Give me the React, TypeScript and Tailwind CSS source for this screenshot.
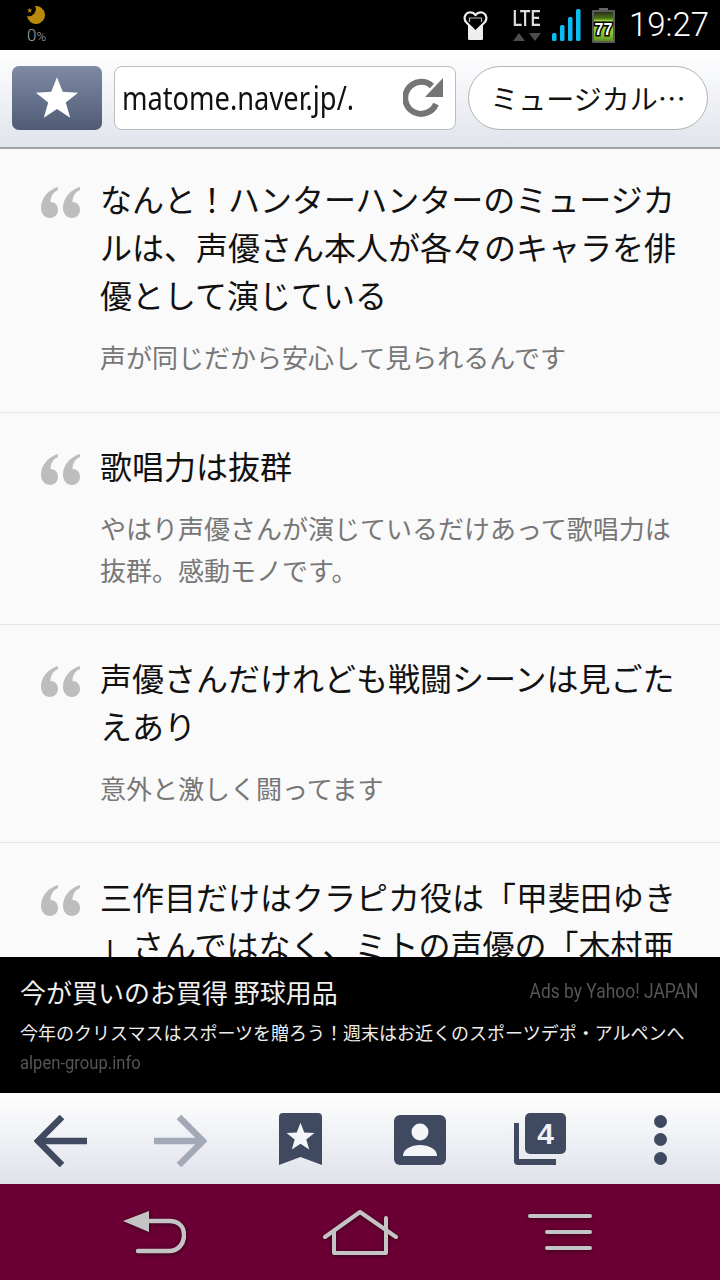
const jp = "font-['Noto_Sans_CJK_JP',sans-serif]";

const STAR = "50,3 63,36 98,38 70,60 80,95 50,75 20,95 30,60 2,38 37,36";

interface Quote {
  title: string[];
  body?: string[];
  pt: string;
}

const quotes: Quote[] = [
  {
    title: ["なんと！ハンターハンターのミュージカ", "ルは、声優さん本人が各々のキャラを俳", "優として演じている"],
    body: ["声が同じだから安心して見られるんです"],
    pt: "pt-[25px] pb-[34px]",
  },
  {
    title: ["歌唱力は抜群"],
    body: ["やはり声優さんが演じているだけあって歌唱力は", "抜群。感動モノです。"],
    pt: "pt-[28px] pb-[33px]",
  },
  {
    title: ["声優さんだけれども戦闘シーンは見ごた", "えあり"],
    body: ["意外と激しく闘ってます"],
    pt: "pt-[28px] pb-[33px]",
  },
  {
    title: ["三作目だけはクラピカ役は「甲斐田ゆき", "」さんではなく、ミトの声優の「木村亜"],
    pt: "pt-[29px]",
  },
];

function QuoteMark() {
  const d = "M17 0C7 3 0 11 0 21C0 27 4 31 9 31C14 31 17 27 17 23C17 18 14 15 9.5 15C9.5 10 12 5 17 3Z";
  return (
    <svg width="40" height="31" viewBox="0 0 40 31" className="mt-[13px] mr-[19px] shrink-0" fill="#bdbdbd">
      <path d={d} />
      <path d={d} transform="translate(22 0)" />
    </svg>
  );
}

function QuoteItem({ q }: { q: Quote }) {
  return (
    <div className={`flex pl-[41px] border-b border-[#e6e6e6] ${q.pt}`}>
      <QuoteMark />
      <div className="whitespace-nowrap">
        <div className="text-[32px] leading-[48px] text-[#111]">
          {q.title.map((t) => (
            <div key={t}>{t}</div>
          ))}
        </div>
        {q.body && (
          <div className="mt-[18px] text-[26px] leading-[42px] text-[#777]">
            {q.body.map((t) => (
              <div key={t}>{t}</div>
            ))}
          </div>
        )}
      </div>
    </div>
  );
}

function StatusBar() {
  return (
    <div className="h-[50px] bg-black flex items-center shrink-0">
      <div className="w-[60px] pl-[27px] flex flex-col">
        <svg width="18" height="18" viewBox="0 0 18 18">
          <path d="M8 0.05A9 9 0 1 1 0.05 10A7 7 0 0 0 8 0.05Z" fill="#b8890b" />
          <polygon points={STAR} fill="#b8890b" transform="translate(0 1.5) scale(.055)" />
        </svg>
        <div className="mt-[4px] text-[17px] leading-[15px] text-[#a8a8a8] font-['Roboto',sans-serif] font-light">
          0<span className="text-[13px]">%</span>
        </div>
      </div>
      <div className="ml-auto flex items-center">
        <svg width="25" height="29" viewBox="0 0 25 29" className="mr-[24px]">
          <rect x="5" y="6" width="15" height="23" rx="1.5" fill="#eee" />
          <path d="M12.5 20.5L3 11C0.5 8 1.5 2.5 6 1.5C8.5 1 11 2 12.5 4C14 2 16.5 1 19 1.5C23.5 2.5 24.5 8 22 11Z" fill="#000" stroke="#eee" strokeWidth="2.2" strokeLinejoin="round" />
          <path d="M6.5 11V7H18.5V11" fill="none" stroke="#bbb" strokeWidth="1.2" />
        </svg>
        <div className="w-[30px] mr-[10px] flex flex-col items-center">
          <div className="text-[22px] leading-[18px] font-medium text-[#ddd] font-['Roboto',sans-serif] scale-x-[.8]">LTE</div>
          <svg width="30" height="8" viewBox="0 0 30 8" className="mt-[5px]">
            <polygon points="1,8 7,0 13,8" fill="#4d4d4d" />
            <polygon points="17,0 29,0 23,8" fill="#4d4d4d" />
          </svg>
        </div>
        <svg width="29" height="32" viewBox="0 0 29 32" fill="#0bbcf5" className="mr-[11px]">
          <rect x="0" y="24" width="4.5" height="8" rx="1.5" />
          <rect x="8" y="16" width="4.5" height="16" rx="1.5" />
          <rect x="16" y="8" width="4.5" height="24" rx="1.5" />
          <rect x="24" y="0" width="4.5" height="32" rx="1.5" />
        </svg>
        <svg width="23" height="35" viewBox="0 0 23 35" className="mr-[14px]">
          <defs>
            <linearGradient id="batt" x1="0" y1="0" x2="0" y2="1">
              <stop offset="0" stopColor="#26301a" />
              <stop offset=".22" stopColor="#4e7418" />
              <stop offset=".3" stopColor="#9ad63e" />
              <stop offset=".75" stopColor="#8cc832" />
              <stop offset="1" stopColor="#5f8f20" />
            </linearGradient>
          </defs>
          <rect x="7" y="0" width="9" height="3" fill="#666" />
          <rect x="0" y="2" width="23" height="33" rx="1" fill="#5a5a5a" />
          <rect x="2" y="4" width="19" height="29" fill="url(#batt)" />
          <text x="11.5" y="26.5" textAnchor="middle" fontSize="16" fontWeight="700" fill="#fff" stroke="#000" strokeWidth="3" paintOrder="stroke" fontFamily="Liberation Sans">77</text>
        </svg>
        <div className="w-[91px] text-[33px] leading-[50px] text-white font-['Roboto',sans-serif] font-light">19:27</div>
      </div>
    </div>
  );
}

function UrlBar() {
  return (
    <div className="h-[99px] shrink-0 flex items-center gap-[12px] px-[12px] pb-[2px] bg-gradient-to-b from-white to-[#e0e4ec] border-b-2 border-[#a2a2a8]">
      <div className="w-[90px] h-[64px] rounded-[7px] flex items-center justify-center bg-gradient-to-b from-[#7f8ba4] to-[#505c76]">
        <svg width="46" height="44" viewBox="0 0 100 100" fill="#fff">
          <polygon points={STAR} />
        </svg>
      </div>
      <div className="w-[342px] h-[64px] rounded-[8px] bg-white border border-[#bcbcbc] flex items-center pl-[7px] pr-[10px]">
        <span className="w-[240px] shrink-0 origin-left scale-x-[.826] text-[33px] leading-none text-[#111] font-['Noto_Sans',sans-serif] whitespace-nowrap">matome.naver.jp/.</span>
        <svg width="42" height="42" viewBox="0 0 42 42" className="ml-auto shrink-0" fill="none">
          <path d="M33 27A16 16 0 1 1 29 9" stroke="#757575" strokeWidth="6" />
          <polygon points="40,1 40,20 22,20" fill="#757575" />
        </svg>
      </div>
      <div className={`w-[240px] h-[64px] rounded-full bg-white border border-[#b4b4b4] flex items-center justify-center text-[28px] text-[#111] ${jp}`}>
        ミュージカル…
      </div>
    </div>
  );
}

function AdBanner() {
  return (
    <div className="h-[136px] shrink-0 bg-black px-[20px] pt-[17px]">
      <div className="flex items-center justify-between h-[36px]">
        <span className="text-[26px] leading-[36px] text-[#f0f0f0]">今が買いのお買得 野球用品</span>
        <span className="mr-[2px] origin-right scale-x-[.83] text-[21px] text-[#555] font-['Roboto',sans-serif] whitespace-nowrap">Ads by Yahoo! JAPAN</span>
      </div>
      <div className="mt-[8px] text-[18px] leading-[28px] text-[#eee] whitespace-nowrap">
        今年のクリスマスはスポーツを贈ろう！週末はお近くのスポーツデポ・アルペンへ
      </div>
      <div className="mt-[3px] w-fit origin-left scale-x-[.875] text-[19px] leading-[28px] text-[#555] font-['Roboto',sans-serif]">alpen-group.info</div>
    </div>
  );
}

function Toolbar() {
  const ink = "#3f4a61";
  return (
    <div className="h-[91px] shrink-0 grid grid-cols-6 pt-[1px] bg-gradient-to-b from-white to-[#dfe2ea]">
      <div className="flex items-center justify-center">
        <svg width="53" height="52" viewBox="0 0 53 52" fill="none" stroke={ink} strokeWidth="6.5" className="mt-[4px]">
          <path d="M53 26H5" />
          <path d="M28 2L4 26L28 50" />
        </svg>
      </div>
      <div className="flex items-center justify-center">
        <svg width="53" height="52" viewBox="0 0 53 52" fill="none" stroke="#a3a9b7" strokeWidth="6.5" className="mt-[4px]">
          <path d="M0 26H48" />
          <path d="M25 2L49 26L25 50" />
        </svg>
      </div>
      <div className="flex items-center justify-center">
        <svg width="43" height="52" viewBox="0 0 43 52">
          <path d="M4 0H39a4 4 0 0 1 4 4V52L21.5 44L0 52V4a4 4 0 0 1 4-4Z" fill={ink} />
          <polygon points={STAR} fill="#f4f5f8" transform="translate(7 9) scale(.29)" />
        </svg>
      </div>
      <div className="flex items-center justify-center">
        <svg width="52" height="50" viewBox="0 0 52 50" className="mt-[1px]">
          <rect width="52" height="50" rx="6" fill={ink} />
          <circle cx="26" cy="17" r="8.5" fill="#f4f5f8" />
          <path d="M9 41C9 34 17 30 26 30C35 30 43 34 43 41Z" fill="#f4f5f8" />
        </svg>
      </div>
      <div className="flex items-center justify-center">
        <svg width="52" height="52" viewBox="0 0 52 52">
          <path d="M0 10H5V46H42V52H4a4 4 0 0 1-4-4Z" fill={ink} />
          <rect x="11" y="0" width="41" height="41" rx="5" fill={ink} />
          <text x="31.5" y="31" textAnchor="middle" fontSize="30" fontWeight="700" fill="#f0f1f5" fontFamily="Liberation Sans">4</text>
        </svg>
      </div>
      <div className="flex flex-col items-center justify-center gap-[5.5px] mt-[1px]">
        <div className="w-[13px] h-[13px] rounded-full bg-[#3f4a61]" />
        <div className="w-[13px] h-[13px] rounded-full bg-[#3f4a61]" />
        <div className="w-[13px] h-[13px] rounded-full bg-[#3f4a61]" />
      </div>
    </div>
  );
}

function NavBar() {
  const c = "#c4c4c4";
  return (
    <div className="h-[96px] shrink-0 bg-[#6b0034] flex items-center pl-[123px]">
      <svg width="63" height="43" viewBox="0 0 63 43" fill="none" className="drop-shadow-[0_1px_2px_rgba(0,0,0,0.5)]">
        <polygon points="0,10 26,0 26,21" fill={c} />
        <path d="M24 10H46C55 10 61 15 61 24C61 33 55 40 46 40H15" stroke={c} strokeWidth="4.5" strokeLinecap="round" />
      </svg>
      <svg width="75" height="45" viewBox="0 0 75 45" fill="none" className="ml-[137px] drop-shadow-[0_1px_2px_rgba(0,0,0,0.5)]" stroke={c} strokeWidth="4" strokeLinecap="round" strokeLinejoin="round">
        <path d="M2 27L37 2L73 27" />
        <path d="M11 22V43H63V8" />
      </svg>
      <svg width="64" height="36" viewBox="0 0 64 36" fill="none" className="ml-[130px] drop-shadow-[0_1px_2px_rgba(0,0,0,0.5)]" stroke={c} strokeWidth="4" strokeLinecap="round">
        <path d="M2 2H62" />
        <path d="M19 18H62" />
        <path d="M19 34H62" />
      </svg>
    </div>
  );
}

export default function App() {
  return (
    <div className={`w-[720px] h-[1280px] flex flex-col overflow-hidden bg-[#fafafa] ${jp}`}>
      <StatusBar />
      <UrlBar />
      <div className="flex-1 min-h-0 overflow-hidden">
        {quotes.map((q) => (
          <QuoteItem key={q.title[0]} q={q} />
        ))}
      </div>
      <AdBanner />
      <Toolbar />
      <NavBar />
    </div>
  );
}
